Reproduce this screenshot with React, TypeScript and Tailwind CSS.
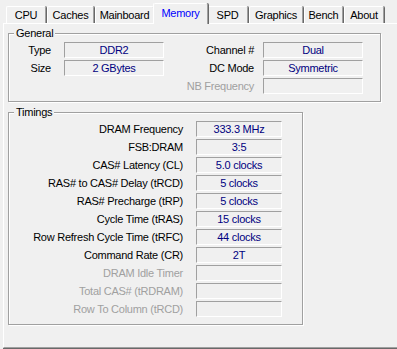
import React from "react";

const tabs = [
  { label: "CPU", w: "w-[40px]" },
  { label: "Caches", w: "w-[47px]" },
  { label: "Mainboard", w: "w-[59px]" },
  { label: "Memory", w: "w-[55px]", active: true },
  { label: "SPD", w: "w-[41px]" },
  { label: "Graphics", w: "w-[54px]" },
  { label: "Bench", w: "w-[39px]" },
  { label: "About", w: "w-[40px]" },
];

const timings = [
  { label: "DRAM Frequency", value: "333.3 MHz" },
  { label: "FSB:DRAM", value: "3:5" },
  { label: "CAS# Latency (CL)", value: "5.0 clocks" },
  { label: "RAS# to CAS# Delay (tRCD)", value: "5 clocks" },
  { label: "RAS# Precharge (tRP)", value: "5 clocks" },
  { label: "Cycle Time (tRAS)", value: "15 clocks" },
  { label: "Row Refresh Cycle Time (tRFC)", value: "44 clocks" },
  { label: "Command Rate (CR)", value: "2T" },
  { label: "DRAM Idle Timer", value: "", disabled: true },
  { label: "Total CAS# (tRDRAM)", value: "", disabled: true },
  { label: "Row To Column (tRCD)", value: "", disabled: true },
];

const Field = ({ value, w }: { value: string; w: string }) => (
  <div
    className={`${w} h-[16px] border border-t-[#a0a0a0] border-l-[#a0a0a0] border-b-white border-r-white text-center text-[#000080] leading-[14px]`}
  >
    {value}
  </div>
);

const GroupBox = ({
  title,
  className,
  children,
}: {
  title: string;
  className: string;
  children: React.ReactNode;
}) => (
  <div
    className={`relative border border-[#a0a0a0] shadow-[inset_1px_1px_0_#fff,1px_1px_0_#fff] ${className}`}
  >
    <span className="absolute -top-[8px] left-[5px] px-[2px] bg-[#f0f0f0] leading-[14px]">
      {title}
    </span>
    {children}
  </div>
);

export default function App() {
  return (
    <div
      className="w-[397px] h-[349px] overflow-hidden bg-[#f0f0f0] text-[11px] tracking-[-0.25px] text-black"
      style={{ fontFamily: '"Liberation Sans", Arial, sans-serif' }}
    >
      {/* Tabs */}
      <div className="flex items-end gap-[1px] pl-[6px] pt-[3px] h-[23px]">
        {tabs.map((t) =>
          t.active ? (
            <div
              key={t.label}
              className={`${t.w} -mx-[2px] h-[21px] -mb-px relative z-10 bg-[#f0f0f0] border-l border-t border-white border-r border-r-[#a0a0a0] shadow-[1px_0_0_#696969] rounded-t-[2px] text-center text-[#0000ff] leading-[18px]`}
            >
              {t.label}
            </div>
          ) : (
            <div
              key={t.label}
              className={`${t.w} h-[17px] border-l border-t border-white border-r border-r-[#a0a0a0] shadow-[1px_0_0_#696969] rounded-t-[2px] text-center leading-[16px]`}
            >
              {t.label}
            </div>
          )
        )}
      </div>

      {/* Tab page */}
      <div className="ml-[3px] w-[400px] h-[325px] border-l border-t border-white border-b border-b-[#a0a0a0] shadow-[0_1px_0_#696969] pl-[4px] pt-[9px]">
        <GroupBox title="General" className="w-[373px] h-[69px]">
          <div className="flex flex-col gap-[2px] pt-[8px]">
            <div className="flex items-center h-[16px]">
              <span className="w-[42px] text-right">Type</span>
              <div className="ml-[13px]">
                <Field value="DDR2" w="w-[100px]" />
              </div>
              <span className="w-[90px] text-right">Channel #</span>
              <div className="ml-[9px]">
                <Field value="Dual" w="w-[100px]" />
              </div>
            </div>
            <div className="flex items-center h-[16px]">
              <span className="w-[42px] text-right">Size</span>
              <div className="ml-[13px]">
                <Field value="2 GBytes" w="w-[100px]" />
              </div>
              <span className="w-[90px] text-right">DC Mode</span>
              <div className="ml-[9px]">
                <Field value="Symmetric" w="w-[100px]" />
              </div>
            </div>
            <div className="flex items-center h-[16px]">
              <span className="w-[42px]" />
              <div className="ml-[13px] w-[100px]" />
              <span className="w-[90px] text-right text-[#a0a0a0]">NB Frequency</span>
              <div className="ml-[9px]">
                <Field value="" w="w-[100px]" />
              </div>
            </div>
          </div>
        </GroupBox>

        <GroupBox title="Timings" className="mt-[10px] w-[295px] h-[213px]">
          <div className="flex flex-col gap-[2px] pt-[8px]">
            {timings.map((r) => (
              <div key={r.label} className="flex items-center h-[16px]">
                <span
                  className={`w-[174px] text-right ${r.disabled ? "text-[#a0a0a0]" : ""}`}
                >
                  {r.label}
                </span>
                <div className="ml-[13px]">
                  <Field value={r.value} w="w-[86px]" />
                </div>
              </div>
            ))}
          </div>
        </GroupBox>
      </div>
    </div>
  );
}
